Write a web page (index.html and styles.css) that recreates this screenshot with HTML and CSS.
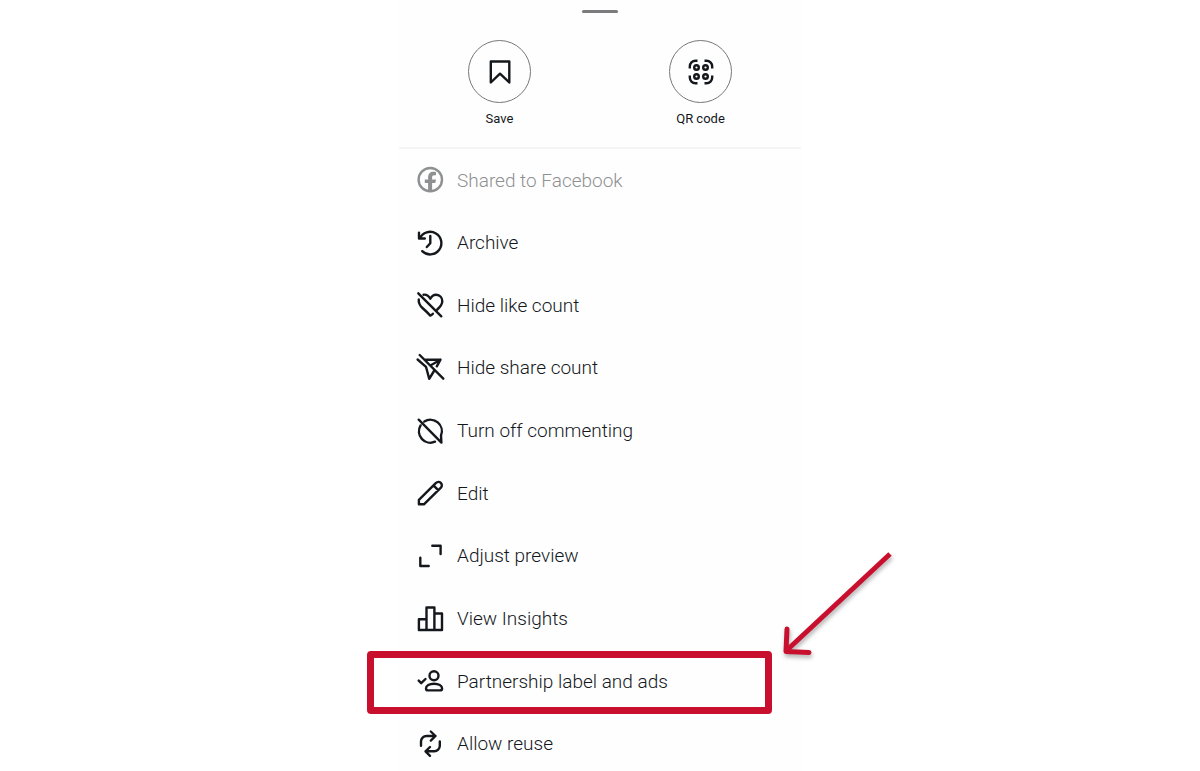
FILE: index.html
```html
<!DOCTYPE html>
<html lang="en">
<head>
    <meta charset="UTF-8">
    <meta name="viewport" content="width=device-width, initial-scale=1.0">
    <title>Post options</title>
    <link rel="stylesheet" href="styles.css">
</head>
<body>
    <main class="sheet">
        <div class="handle"></div>

        <div class="actions">
            <button class="action" type="button">
                <span class="action-circle">
                    <svg class="icon" viewBox="0 0 26 26"><path d="M3.800 2.500h18.500v21L13 14.700 3.800 23.500z"/></svg>
                </span>
                Save
            </button>
            <button class="action" type="button">
                <span class="action-circle">
                    <svg class="icon icon-qr" viewBox="0 0 26 26">
                        <path d="M1.800 9.500V7.500a5.700 5.700 0 0 1 5.700-5.700h2M16.500 1.800h2a5.700 5.700 0 0 1 5.700 5.700v2M24.200 16.500v2a5.700 5.700 0 0 1-5.700 5.700h-2M9.500 24.200h-2a5.700 5.700 0 0 1-5.700-5.700v-2"/>
                        <circle cx="8.500" cy="8.500" r="2.300"/>
                        <circle cx="17.500" cy="8.500" r="2.300"/>
                        <circle cx="8.500" cy="17.500" r="2.300"/>
                        <circle cx="17.500" cy="17.500" r="2.300"/>
                    </svg>
                </span>
                QR code
            </button>
        </div>

        <ul class="menu">
            <li class="item">
                <button class="row" type="button" disabled>
                    <svg class="icon" viewBox="0 0 26 26">
                        <circle cx="13.300" cy="12.700" r="11.700"/>
                        <path class="solid" d="M11.100 24.500V16H7.800v-3.600h3.300v-1.900c0-3.900 2-5.800 5.300-5.800 1 0 1.900.1 2.600.3v3.300h-1.700c-1.600 0-2.200.8-2.200 2.100v2h3.900l-.7 3.600h-3.200v8.500z"/>
                    </svg>
                    Shared to Facebook
                </button>
            </li>
            <li class="item">
                <button class="row" type="button">
                    <svg class="icon" viewBox="0 0 26 26"><path d="M2 2.700v5.800h5.800M2.800 8.500A11.300 11.300 0 1 1 5.200 21.200M13.300 6v7.200L9.800 17"/></svg>
                    Archive
                </button>
            </li>
            <li class="item">
                <button class="row" type="button">
                    <svg class="icon" viewBox="0 0 26 26"><path d="M1.300 1.300l23 23M6.500 2.700c3-.4 5.300 1.200 6.800 4.100C14.600 4.200 16.800 2.600 19.300 2.700c3.600.2 6 3 6 6.500 0 3.200-2 5.500-5 8.300M1.800 7.500C1.300 11.500 3 13.700 5.500 16c2.700 2.400 5 4.600 7.800 7.600.9-.4 1.800-1 2.600-1.900"/></svg>
                    Hide like count
                </button>
            </li>
            <li class="item">
                <button class="row" type="button">
                    <svg class="icon" viewBox="0 0 26 26"><path d="M2.700 0l23.600 23.700M.6 4.500l8.400 7.300 3.200 12L17 16M8.700 4.700h14.800l-3.700 6.600M23.500 4.700l-9.300 5.300"/></svg>
                    Hide share count
                </button>
            </li>
            <li class="item">
                <button class="row" type="button">
                    <svg class="icon" viewBox="0 0 26 26"><path d="M1.700 1.700l22.700 22.900M7.300 3.600A11.400 11.400 0 0 1 24 17.500l.4 7.100M3.600 7.400A11.400 11.400 0 0 0 18 23.700"/></svg>
                    Turn off commenting
                </button>
            </li>
            <li class="item">
                <button class="row" type="button">
                    <svg class="icon" viewBox="0 0 26 26"><path d="M1.900 24.300v-4.500L19 2.900a3.300 3.300 0 0 1 4.900 4.700L6.900 24.300zM16.500 5.400l4.700 4.700"/></svg>
                    Edit
                </button>
            </li>
            <li class="item">
                <button class="row" type="button">
                    <svg class="icon" viewBox="0 0 26 26"><path d="M15.300 2.700h8.300V11M3.300 14.700V23h8.400"/></svg>
                    Adjust preview
                </button>
            </li>
            <li class="item">
                <button class="row" type="button">
                    <svg class="icon" viewBox="0 0 26 26"><path d="M1.900 24V13.200h7.600V24zM9.500 24V1.500h7.900V24zM17.400 24V7.500H25V24z"/></svg>
                    View Insights
                </button>
            </li>
            <li class="item highlighted">
                <button class="row" type="button">
                    <svg class="icon" viewBox="0 0 26 26">
                        <circle cx="17" cy="7.800" r="4.500"/>
                        <path d="M9 20.400c0-2.700 3.300-4.700 8-4.700s8.100 2 8.100 4.700c0 1.400-.9 2-2.300 2H11.300c-1.400 0-2.300-.6-2.300-2zM1.700 12.600l2.500 2.600L8.500 11"/>
                    </svg>
                    Partnership label and ads
                </button>
                <svg class="arrow" viewBox="0 0 125 120">
                    <path class="arrow-shaft" d="M114 9L10 106"/>
                    <path class="arrow-head" d="M11 84L10 106.500l23 1"/>
                </svg>
            </li>
            <li class="item">
                <button class="row" type="button">
                    <svg class="icon" viewBox="0 0 26 26"><path d="M4 14.700V10.500a5.500 5.500 0 0 1 5.500-5.500h9M13.800.5L18.500 5l-4.700 4.600M22.800 10.500v4.300a5.500 5.500 0 0 1-5.500 5.500H8.700M13 16l-4.500 4.300L13 24.800"/></svg>
                    Allow reuse
                </button>
            </li>
        </ul>
    </main>
</body>
</html>
```
FILE: styles.css
```css
* {
    box-sizing: border-box;
}
body {
    margin: 0;
    font-family: Roboto, Arial, sans-serif;
    color: #14181c;
    background: #fff;
}
button {
    padding: 0;
    border: 0;
    background: none;
    font: inherit;
    color: inherit;
    cursor: pointer;
}
.sheet {
    display: flex;
    flex-direction: column;
    max-width: 402px;
    min-height: 100vh;
    margin: 0 auto;
    padding-top: 10px;
    background: #fefefe;
}
.handle {
    align-self: center;
    width: 36px;
    height: 3px;
    border-radius: 2px;
    background: #7b7b7e;
}

/* round buttons on top */
.actions {
    display: flex;
    padding: 27px 0 19px;
    border-bottom: 2px solid #f5f5f5;
}
.action {
    flex: 1;
    display: flex;
    flex-direction: column;
    align-items: center;
    gap: 7px;
    font-size: 13px;
    line-height: 18px;
}
.action-circle {
    display: flex;
    align-items: center;
    justify-content: center;
    width: 63px;
    height: 63px;
    border: 1px solid #777;
    border-radius: 50%;
}

/* option list */
.menu {
    flex: 1;
    display: flex;
    flex-direction: column;
    justify-content: space-between;
    margin: 0;
    padding: 4px 0 0;
    list-style: none;
}
.item {
    position: relative;
}
.row {
    display: flex;
    align-items: center;
    gap: 14px;
    width: 100%;
    height: 54px;
    padding: 0 18px;
    font-size: 19px;
    font-weight: 350;
    text-align: left;
}
.row:disabled {
    color: #8f9091;
    cursor: default;
}
.icon {
    flex: none;
    width: 26px;
    height: 26px;
    overflow: visible;
    fill: none;
    stroke: currentColor;
    stroke-width: 2.4;
    stroke-linecap: round;
    stroke-linejoin: round;
}
.icon .solid {
    fill: currentColor;
    stroke: none;
}
.icon-qr {
    stroke-linecap: butt;
}

/* callout box and arrow */
.highlighted::after {
    content: "";
    position: absolute;
    inset: -3px 29px -6px -32px;
    border: 7px solid #c8102e;
    border-radius: 4px;
    pointer-events: none;
}
.arrow {
    position: absolute;
    top: -109px;
    left: 377px;
    width: 125px;
    height: 120px;
    fill: none;
    stroke: #c8102e;
    filter: drop-shadow(1px 3px 2px rgba(0, 0, 0, 0.3));
    pointer-events: none;
}
.arrow-shaft,
.arrow-head {
    stroke-width: 5;
}
.arrow-head {
    stroke-linecap: round;
    stroke-linejoin: round;
}
```
